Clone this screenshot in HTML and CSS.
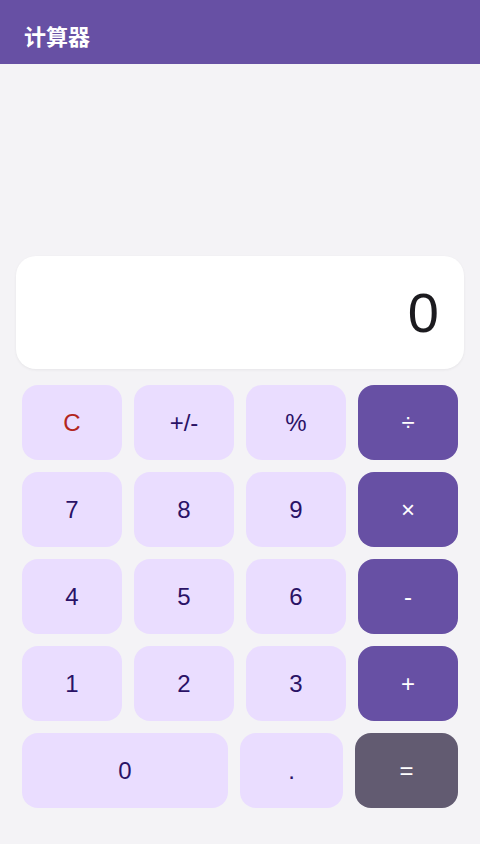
FILE: index.html
```html
<!DOCTYPE html>
<html lang="zh">
<head>
<meta charset="utf-8">
<title>计算器</title>
<link rel="stylesheet" href="styles.css">
</head>
<body>
<header class="appbar"><h1 class="title">计算器</h1></header>
<main class="main">
  <div class="display"><span class="value">0</span></div>
  <div class="keypad">
    <div class="row">
      <button class="key key-clear">C</button>
      <button class="key">+/-</button>
      <button class="key">%</button>
      <button class="key key-op">÷</button>
    </div>
    <div class="row">
      <button class="key">7</button>
      <button class="key">8</button>
      <button class="key">9</button>
      <button class="key key-op">×</button>
    </div>
    <div class="row">
      <button class="key">4</button>
      <button class="key">5</button>
      <button class="key">6</button>
      <button class="key key-op">-</button>
    </div>
    <div class="row">
      <button class="key">1</button>
      <button class="key">2</button>
      <button class="key">3</button>
      <button class="key key-op">+</button>
    </div>
    <div class="row">
      <button class="key key-wide">0</button>
      <button class="key">.</button>
      <button class="key key-eq">=</button>
    </div>
  </div>
</main>
</body>
</html>
```
FILE: styles.css
```css
* { box-sizing: border-box; }
html, body { margin: 0; padding: 0; height: 100%; }
body {
  background: #f4f3f6;
  font-family: "Liberation Sans", Arial, "Noto Sans CJK SC", sans-serif;
  display: flex;
  flex-direction: column;
  min-height: 844px;
}
.appbar {
  height: 64px;
  background: #6750a4;
  display: flex;
  align-items: center;
  padding: 6px 24px 0;
  flex: none;
}
.title {
  margin: 0;
  color: #ffffff;
  font-family: "Noto Sans CJK SC", sans-serif;
  font-size: 22px;
  font-weight: 700;
  line-height: 1.2;
}
.main {
  flex: 1;
  display: flex;
  flex-direction: column;
  justify-content: flex-end;
  gap: 16px;
  padding: 0 16px 36px;
}
.display {
  height: 113px;
  background: #ffffff;
  border-radius: 20px;
  box-shadow: 0 1px 3px rgba(0,0,0,0.06);
  display: flex;
  align-items: center;
  justify-content: flex-end;
  padding: 0 25px;
}
.value {
  font-size: 56px;
  line-height: 1;
  color: #1c1b1f;
}
.keypad {
  display: flex;
  flex-direction: column;
  gap: 12px;
  padding: 0 6px;
}
.row {
  display: flex;
  gap: 12px;
}
.key {
  flex: 1 1 0;
  height: 75px;
  border: none;
  border-radius: 16px;
  background: #eaddff;
  color: #2a1266;
  font-family: "Liberation Sans", Arial, sans-serif;
  font-size: 24px;
  padding: 0;
}
.key-wide { flex-grow: 2; }
.key-clear { color: #b3261e; }
.key-op { background: #6750a4; color: #ffffff; }
.key-eq { background: #625b71; color: #ffffff; }
```
